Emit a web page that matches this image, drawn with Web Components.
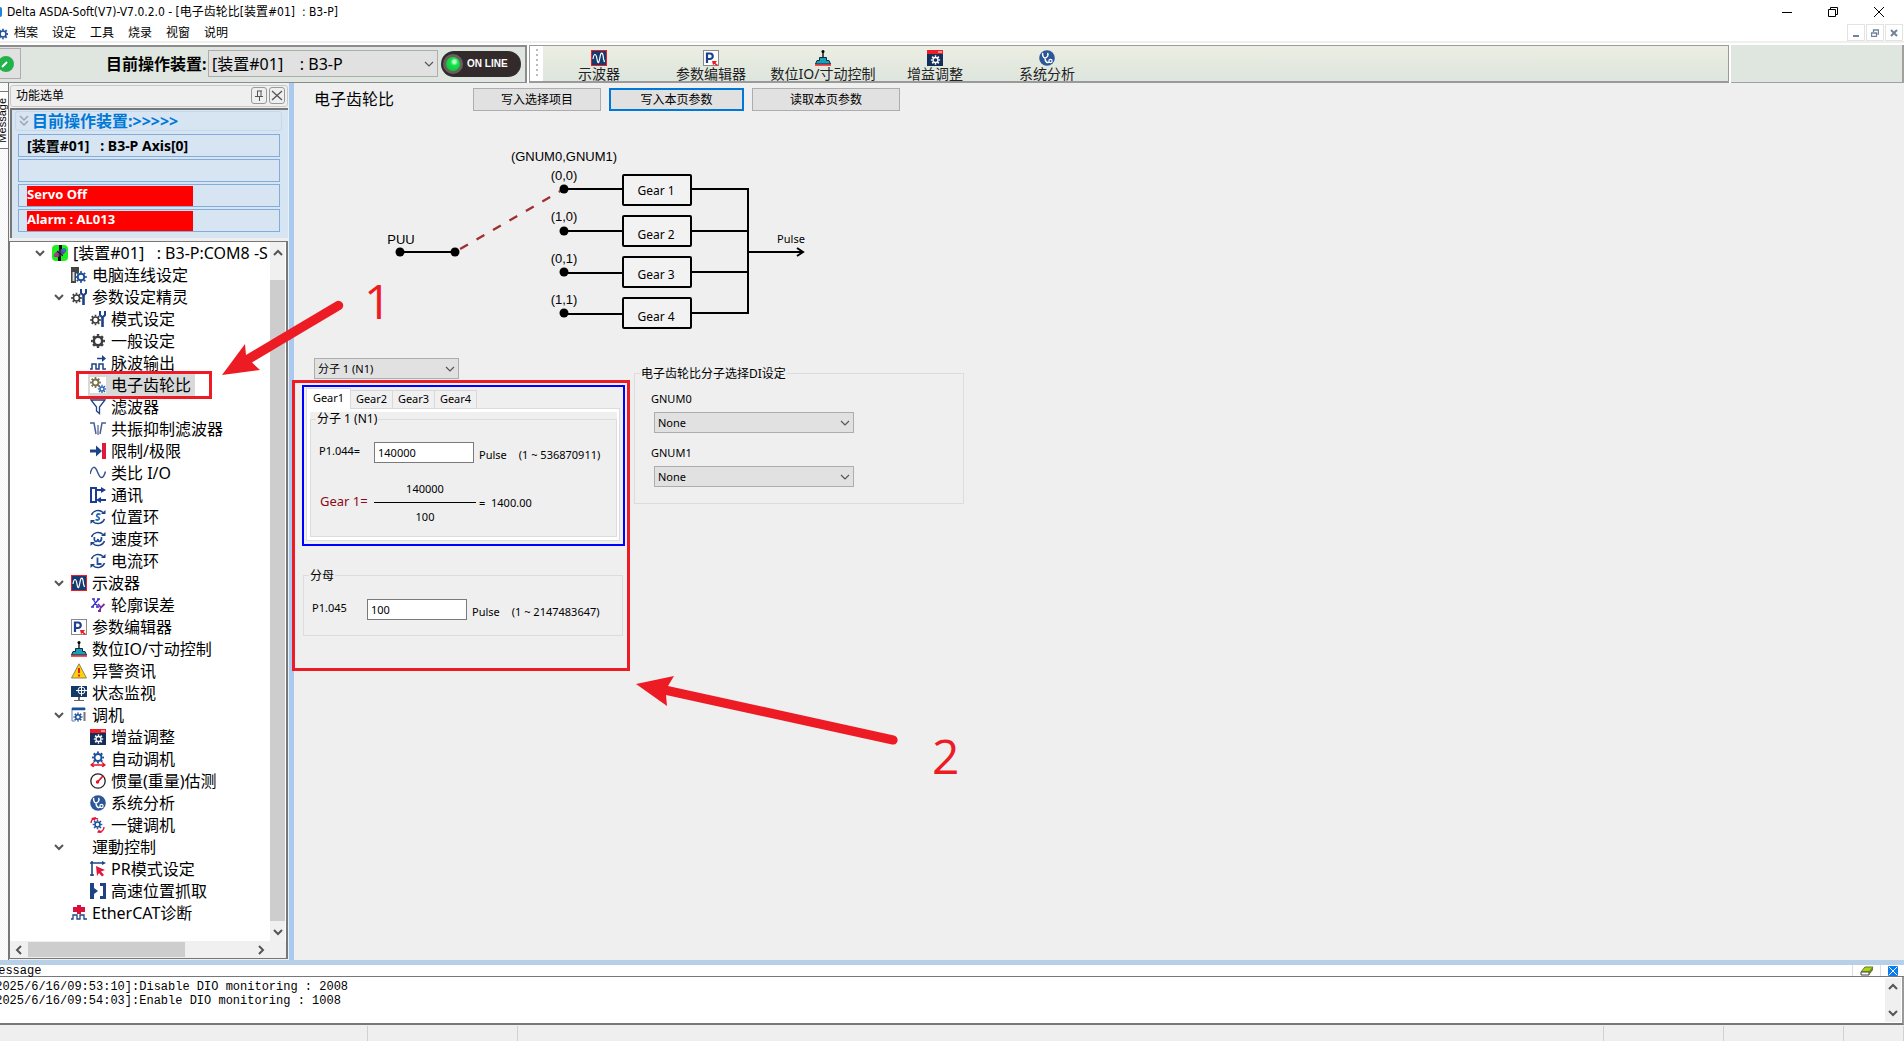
<!DOCTYPE html>
<html lang="zh-CN">
<head>
<meta charset="utf-8">
<title>Delta ASDA-Soft(V7)-V7.0.2.0</title>
<style>
html,body{margin:0;height:100%}
body{overflow:hidden;background:#efefef;color:#000;font:12px/16px "Noto Sans","Noto Sans CJK SC",sans-serif}
</style>
</head>
<body>
<asda-app></asda-app>
<script>
const gear=(x,y,r,c,w=2)=>`<circle cx="${x}" cy="${y}" r="${r}" fill="none" stroke="${c}" stroke-width="${w}"/><circle cx="${x}" cy="${y}" r="${r+w/2+.6}" fill="none" stroke="${c}" stroke-width="1.8" pathLength="16" stroke-dasharray="1 1" stroke-dashoffset=".5"/>`;
const N='#1f4287',B='#1c4f9c',K='#3c3c3c',R='#e81123';
const wrench=`<path d="M12.500 16V7" stroke="${N}" stroke-width="2.600"/><path d="M10 0v4l2.500 2.500L15 4V0" fill="none" stroke="${N}" stroke-width="2"/>`;
const loop=(g)=>`<path d="M1.500 6A7 7 0 0 1 13 3.500M14.500 10A7 7 0 0 1 3 12.500" fill="none" stroke="${N}" stroke-width="1.500"/><path d="M11 5h4.500V1zM5 11H.5v4z" fill="${N}"/>${g}`;
const icons={
root:`<rect width="16" height="16" rx="4" fill="#1df01d"/><path d="M7 0h3v5H7zM6 11h3v5H6z" fill="#111"/><ellipse cx="8" cy="8" rx="7" ry="2.800" transform="rotate(-30 8 8)" fill="#5a4a8c"/><circle cx="4" cy="10" r="2" fill="#c0308a"/><circle cx="12" cy="5" r="2" fill="#2f6fd0"/><path d="M5 6l6 5M8 5v7" stroke="#111"/>`,
pc:`<path d="M0 0h8v6H5v10H0z" fill="#444"/><path d="M1.500 5h2v9h-2z" fill="#ddd"/>${gear(10,10,3.300,B,2)}`,
wiz:gear(5.500,9,3,K,1.600)+wrench,
gear:gear(8,8,4.200,K,2.600),
pulse:`<path d="M0 14h2V9h4v5h3V9h4v5h3" fill="none" stroke="${N}" stroke-width="1.500"/><path d="M7 3.500h6" stroke="${N}" stroke-width="1.500"/><path d="M12 0l4 3.500L12 7z" fill="${N}"/>`,
ratio:`<rect width="16" height="16" fill="#fff"/>${gear(5.500,5.500,3,'#77704a',1.800)}${gear(12,12,2,'#2c64b4',1.400)}`,
filter:`<path d="M1 1h14L9.500 8v6.500L6.500 12V8z" fill="#fff" stroke="${N}" stroke-width="1.300"/>`,
notch:`<path d="M0 2h4l2 11M16 2h-4l-2 11" fill="none" stroke="#4a5f93" stroke-width="1.500"/><path d="M8 4v10" stroke="#4a5f93" stroke-width="1.200"/>`,
limit:`<path d="M0 8h7" stroke="${N}" stroke-width="3"/><path d="M6 2.500L12 8l-6 5.500z" fill="${N}"/><path d="M12 0h4v16h-4z" fill="#e0183c"/>`,
sine:`<path d="M0 9C2.500 0 5 1 7.500 7s5 9 8-.5" fill="none" stroke="#3a568f" stroke-width="1.500"/>`,
comm:`<path d="M1 1h5v14H1z" fill="none" stroke="#1c3c94" stroke-width="2"/><path d="M7 3h6M16 13H9" stroke="#1c3c94" stroke-width="2"/><path d="M11 0l5 3-5 3zM11 10l-5 3 5 3z" fill="#1c3c94"/>`,
ps:loop(`<path d="M10.500 5.500C7 4 5.500 7 8 8s1 4-2.500 2.500" fill="none" stroke="#2a6bb5" stroke-width="1.800"/>`),
vs:loop(`<path d="M4.500 6c-1 5 2.500 6 3.500 2 0 4 4 3 3.500-2" fill="none" stroke="${B}" stroke-width="1.700"/>`),
cs:loop(`<path d="M7.500 4.500v6.500h4" fill="none" stroke="${B}" stroke-width="1.800"/>`),
scope:`<rect x=".5" y=".5" width="15" height="15" fill="#173a6e" stroke="#ee1c25"/><path d="M2 9c1-6 3-6 4 0s2 4 3-2 3-5 3.500 2l1 3" fill="none" stroke="#fff" stroke-width="1.200"/>`,
xy:`<path d="M3 2l5 8M9 2L2 10M2 2h3M7 2h3M1 10h3M6 10h3" stroke="#3a2fd0" stroke-width="1.300"/><path d="M8 7l3 3.500L14.500 7M11 10l-1.500 4M8 14h3" fill="none" stroke="#7a2f9a" stroke-width="1.800"/>`,
param:`<rect x=".5" y=".5" width="15" height="15" fill="#fff" stroke="#8a8a8a"/><path d="M4 13V3.500h3a2.500 2.500 0 0 1 0 5.500H4" fill="none" stroke="#1c3f94" stroke-width="2.200"/><path d="M9 11l5 0-1.500 2 2.500 2-1.500 1-2-2-1.500 1z" fill="#ee1c25"/>`,
dio:`<circle cx="8" cy="1.500" r="1.500"/><path d="M8 2v6" stroke="#000" stroke-width="1.300"/><path d="M4.500 7.500h7v3h2.500l1.500 3.500H.5L2 10.500h2.500z" fill="#1aa0b4" stroke="#0d2848"/><path d="M0 15h16" stroke="#ee1c25" stroke-width="1.500"/>`,
warn:`<path d="M8 .8L15.500 15H.5z" fill="#ffd200" stroke="#8a8468" stroke-linejoin="round"/><path d="M8 5v5M8 11.500v2" stroke="#ee1c25" stroke-width="2"/>`,
mon:`<path d="M0 1h16v11H0z" fill="#123a68"/><path d="M7 12h2v3h4v1H3v-1h4z" fill="#666"/><circle cx="10.500" cy="5.500" r="3.500" fill="none" stroke="#fff"/><path d="M10.500 0v11M5 5.500h11" stroke="#fff"/>`,
tune:`<path d="M1 14V1h13v2M1 14h3" fill="none" stroke="#5b83ba"/><path d="M1 2h13" stroke="#1c4f9c" stroke-width="2.500"/>${gear(7,10,2.300,B,1.500)}<path d="M13.500 5v9" stroke="#777" stroke-width="2"/>`,
gain:`<rect width="16" height="16" fill="#142e5c"/><path d="M0 0h16v4H0z" fill="#ee1c25"/><path d="M11 2h4" stroke="#fff"/>${gear(8.500,10,2.500,'#fff',1.300)}`,
auto:gear(8,6.500,3.500,B,2)+`<path d="M1 14h14M4 11.500L1 14l3 2M12 11.500l3 2.500-3 2" fill="none" stroke="${R}" stroke-width="1.300"/>`,
inertia:`<circle cx="8" cy="8" r="7.200" fill="#fff" stroke="#222" stroke-width="1.300"/><path d="M13 3L7 9.500" stroke="${R}" stroke-width="1.800"/><circle cx="7.500" cy="9" r="1.700" fill="${R}"/>`,
sys:`<circle cx="8" cy="8" r="7.800" fill="#2b5798"/><path d="M4 3c-1 1 0 5 2 5s4-3 2.500-5M6 8c0 5 3 5 4.500 4" fill="none" stroke="#fff" stroke-width="1.500"/><circle cx="11.500" cy="11" r="1.600" fill="none" stroke="#fff" stroke-width="1.200"/>`,
one:gear(7.500,7.500,2.500,B,1.600)+`<path d="M1 6c0-4 4-5.500 7-4M8 14.500c4 1 6-1.500 6-4.500" fill="none" stroke="#e0183c" stroke-width="1.400"/><path d="M1 1l5-1-1 4zM12 16l-5-.500 2-3z" fill="#e0183c"/>`,
pr:`<path d="M2 0v15M0 2h14M0 14h4" fill="none" stroke="${N}" stroke-width="1.600"/><path d="M12 0l4 2-4 2z" fill="${N}"/><path d="M6 5l9 4-4 1.500 3 3.500-2 1.500-3-3.500-2 3z" fill="#e0183c"/>`,
capture:`<path d="M0 0h4v5l4 3-4 3v5H0zM10 0h6v16h-6v-3h3V3h-3z" fill="${N}"/>`,
ecat:`<path d="M6 0h4v2h4v5h-4v2H6V7H2V2h4z" fill="#d8103a"/><path d="M0 14h2v-4h4v4h3v-4h4v4h3" fill="none" stroke="${N}" stroke-width="1.300"/>`,
none:''
};
function define(name,html,setup){
  const t=document.createElement('template');t.innerHTML=html;
  customElements.define(name,class extends HTMLElement{
    constructor(){super();this.attachShadow({mode:'open'}).append(t.content.cloneNode(true));}
    connectedCallback(){if(setup&&!this.ready){this.ready=true;setup(this,this.shadowRoot);}}
  });
}
define('app-icon',`<style>:host{display:block;width:16px;height:16px;flex:none}svg{display:block;width:100%;height:100%}</style><svg viewBox="0 0 16 16" aria-hidden="true"></svg>`,
 (h,s)=>{s.querySelector('svg').innerHTML=icons[h.getAttribute('name')]||'';});

define('chevron-mark',`<style>:host{display:block;width:10px;height:10px;flex:none}:host([dir=up]){transform:rotate(180deg)}:host([dir=left]){transform:rotate(90deg)}:host([dir=right]){transform:rotate(-90deg)}svg{display:block}</style><svg width="10" height="10" aria-hidden="true"><path d="M1 3L5 7 9 3" fill="none" stroke="#555"/></svg>`,
 (h,s)=>{s.querySelector('path').setAttribute('stroke-width',h.hasAttribute('thin')?'1.2':'2');});

define('combo-box',`<style>
:host{display:grid;height:21px;font-size:11px}
select{grid-area:1/1;appearance:none;margin:0;width:100%;height:100%;padding:0 24px 0 3px;border:1px solid #adadad;border-radius:0;background:#e1e1e1;color:#000;font:inherit;white-space:pre}
chevron-mark{grid-area:1/1;justify-self:end;align-self:center;margin-right:4px;pointer-events:none}
</style><select><option></option></select><chevron-mark thin></chevron-mark>`,
 (h,s)=>{const e=s.querySelector('select');e.options[0].textContent=h.getAttribute('value').replace(/_/g,'\u00a0');e.setAttribute('aria-label',h.getAttribute('label'));});

define('title-bar',`<style>
:host{display:flex;align-items:center;box-sizing:border-box;height:24px;background:#fff;padding:0 20px 1px 0;white-space:pre}
i{width:2px;height:10px;background:#1b86d8;border-radius:0 4px 4px 0;margin-right:5px}
span{flex:1;font-family:"DejaVu Sans Condensed","Noto Sans CJK SC",sans-serif}
.c{display:flex;gap:36px}button{border:0;background:none;padding:0;width:10px;height:12px}svg{display:block}
</style><i></i><span>Delta ASDA-Soft(V7)-V7.0.2.0 - [电子齿轮比[装置#01]&nbsp; : B3-P]</span>
<div class="c"><button aria-label="Minimize"><svg width="10" height="12"><path d="M0 6.500h10" stroke="#000"/></svg></button>
<button aria-label="Restore"><svg width="10" height="12"><path d="M.5 3.500h7v7h-7zM2.500 3.500v-2h7v7h-2" fill="none" stroke="#000"/></svg></button>
<button aria-label="Close"><svg width="10" height="12"><path d="M0 1l10 10M10 1L0 11" stroke="#000"/></svg></button></div>`);

define('menu-bar',`<style>
:host{display:flex;align-items:center;height:17px;background:#fff;padding-right:1px}
nav{flex:1;display:flex;gap:14px;padding-left:6px}
button{border:0;background:none;padding:0;font:inherit;color:inherit}
.m{display:flex;gap:1px}.m button{width:18px;height:17px;border:1px solid #e3e3e3;display:grid;place-items:center}svg{display:block}
</style><svg width="8" height="14"><g transform="translate(-8 -2)">${gear(11,10,3,B,1.600)}</g></svg>
<nav><button>档案</button><button>设定</button><button>工具</button><button>烧录</button><button>视窗</button><button>说明</button></nav>
<div class="m"><button aria-label="Minimize document"><svg width="8" height="8"><path d="M1 7h6" stroke="#70839a" stroke-width="2"/></svg></button>
<button aria-label="Restore document"><svg width="8" height="8"><path d="M.5 4h5v3.500h-5zM2.500 3V1h5v4h-1" fill="none" stroke="#70839a" stroke-width="1.300"/></svg></button>
<button aria-label="Close document"><svg width="8" height="8"><path d="M1 1l6 6M7 1L1 7" stroke="#70839a" stroke-width="2"/></svg></button></div>`);

define('tool-button',`<style>
:host{display:block;width:112px;height:100%}
button{display:flex;flex-direction:column;align-items:center;width:100%;height:100%;border:0;background:none;padding:4px 0 0;font:14px/16px "Noto Sans","Noto Sans CJK SC",sans-serif;color:#222;white-space:nowrap}
</style><button><app-icon></app-icon><slot></slot></button>`,(h,s)=>{s.querySelector('app-icon').outerHTML=`<app-icon name="${h.getAttribute('icon')}"></app-icon>`;});

define('tool-bars',`<style>
:host{display:flex;border-top:2px solid #efefef;padding-top:2px;background:#fff;height:38px}
.dev{box-sizing:border-box;width:527px;display:flex;align-items:center;background:#dfe6df;border:solid #8c8c8c;border-width:2px 2px 1px 0;padding-bottom:2px}
.go{box-sizing:border-box;width:21px;height:31px;border:1px solid #adadad;border-left:0;background:#e1e1e1;padding:0;margin-right:85px}
.go svg{display:block}
label{font:bold 16px/24px "Noto Sans","Noto Sans CJK SC",sans-serif;width:102px;white-space:nowrap}
combo-box{width:230px;height:27px;font-size:16px}
.on{display:flex;align-items:center;gap:4px;box-sizing:border-box;width:80px;height:26px;margin-left:3px;border-radius:13px;background:#332b2b;color:#fff;font:bold 10px/12px "Liberation Sans",sans-serif;padding-left:2px;white-space:nowrap}
.on i{box-sizing:border-box;width:20px;height:20px;border-radius:50%;border:3px solid #66605e;background:radial-gradient(circle at 60% 35%,#b6ffc4 0 12%,#19e04a 30%,#0bb634)}
.bar{box-sizing:border-box;width:1200px;flex:0 1 1200px;margin-left:2px;display:flex;border:solid #9a9a9a;border-width:1px 1px 2px 1px;background:linear-gradient(#eceee2,#dde5dd)}
.grip{width:13px;background:#fff;display:flex;justify-content:center}
.grip i{width:2px;margin:3px 0;background:repeating-linear-gradient(#bbb 0 2px,#fff 2px 5px)}
.rest{flex:1;margin-left:2px;background:#dfe6df;border:solid #a0a0a0;border-width:0 2px 1px 0}
</style>
<div class="dev"><button class="go" aria-label="Connect"><svg width="20" height="29"><circle cx="6" cy="15" r="8" fill="#22b24c"/><path d="M2 18l5-5" stroke="#fff" stroke-width="2"/></svg></button>
<label>目前操作装置:</label><combo-box value="[装置#01]___ : B3-P" label="目前操作装置"></combo-box><div class="on"><i></i>ON LINE</div></div>
<div class="bar"><div class="grip"><i></i></div>
<tool-button icon="scope">示波器</tool-button><tool-button icon="param">参数编辑器</tool-button><tool-button icon="dio">数位IO/寸动控制</tool-button><tool-button icon="gain">增益调整</tool-button><tool-button icon="sys">系统分析</tool-button></div>
<div class="rest"></div>`);

define('dock-strip',`<style>
:host{display:block;box-sizing:border-box;width:9px;overflow:hidden;padding-top:8px;border-right:1px solid #777;background:repeating-conic-gradient(#f3f3f3 0 25%,#fff 0 50%) 0 0/2px 2px}
button{display:flex;justify-content:flex-end;align-items:center;width:8px;height:58px;border:solid #777;border-width:1px 0;background:#fff;padding:0}
span{writing-mode:vertical-rl;transform:rotate(180deg);font-size:11px;line-height:12px}
</style><button aria-label="Message"><span>Message</span></button>`);

define('device-group',`<style>
:host{display:block;box-sizing:border-box;height:130px;border:solid #777;border-width:2px 0 0 2px;background:#d7e4f2;padding:1px 6px 0 3px;font:bold 13px/18px "Noto Sans","Noto Sans CJK SC",sans-serif;white-space:nowrap}
.h{box-sizing:border-box;height:20px;margin-bottom:3px;display:flex;align-items:center;gap:3px;padding-left:3px;border:1px solid #c5d8ec;border-radius:3px;color:#0078d7;font-size:16px}
.g{display:flex;flex-direction:column;gap:2px;padding:0 2px 0 3px}
.r{box-sizing:border-box;height:23px;border:1px solid #84acdb;padding:0 8px;display:flex;align-items:center}
.n{font-size:14px}
.a{background:red;color:#fff;width:166px;height:20px;line-height:17px}
</style><div class="h"><svg width="10" height="12"><path d="M1 1l4 4 4-4M1 6l4 4 4-4" fill="none" stroke="#9aa5b0" stroke-width="1.500"/></svg>目前操作装置:&gt;&gt;&gt;&gt;&gt;</div>
<div class="g"><div class="r n">[装置#01]&nbsp;&nbsp; : B3-P Axis[0]</div><div class="r"></div><div class="r"><div class="a">Servo Off</div></div><div class="r"><div class="a">Alarm : AL013</div></div></div>`);

define('tree-item',`<style>
:host{display:flex;align-items:center;height:22px;font-size:16px;white-space:nowrap;padding-left:calc(25px + 19px*(var(--l) - 1))}
.x{width:10px;margin-right:7px;flex:none}
.t{display:flex;align-items:center;gap:5px;height:22px;padding:0 4px 0 2px;margin-left:-2px}
:host([aria-selected]) .t{background:#d9d9d9}
</style><div class="x"></div><div class="t"><app-icon></app-icon><span><slot></slot></span></div>`,
 (h,s)=>{h.setAttribute('role','treeitem');h.style.setProperty('--l',h.getAttribute('level'));
 s.querySelector('app-icon').outerHTML=`<app-icon name="${h.getAttribute('icon')}"></app-icon>`;
 if(h.hasAttribute('open'))s.querySelector('.x').innerHTML='<chevron-mark></chevron-mark>';});

define('nav-tree',`<style>
:host{box-sizing:border-box;flex:1;min-height:0;display:grid;grid-template:1fr 17px/1fr 16px;border:1px solid #777;border-right-width:2px;background:#fff}
.v{overflow:hidden}
.sy,.sx{display:flex;align-items:center;background:#f0f0f0}
.sy{flex-direction:column;width:15px}.sy chevron-mark{margin:6px 0 4px}.sy i{flex:1;width:15px;background:#cdcdcd;margin-top:18px}
.sx chevron-mark{margin:0 4px}.sx i{height:15px;width:157px;background:#cdcdcd;margin-right:auto}
.k{background:#f0f0f0}
</style><div class="v" role="tree">
<tree-item level="1" icon="root" open>[装置#01]&nbsp;&nbsp; : B3-P:COM8 -S</tree-item>
<tree-item level="2" icon="pc">电脑连线设定</tree-item>
<tree-item level="2" icon="wiz" open>参数设定精灵</tree-item>
<tree-item level="3" icon="wiz">模式设定</tree-item>
<tree-item level="3" icon="gear">一般设定</tree-item>
<tree-item level="3" icon="pulse">脉波输出</tree-item>
<tree-item level="3" icon="ratio" aria-selected="true">电子齿轮比</tree-item>
<tree-item level="3" icon="filter">滤波器</tree-item>
<tree-item level="3" icon="notch">共振抑制滤波器</tree-item>
<tree-item level="3" icon="limit">限制/极限</tree-item>
<tree-item level="3" icon="sine">类比 I/O</tree-item>
<tree-item level="3" icon="comm">通讯</tree-item>
<tree-item level="3" icon="ps">位置环</tree-item>
<tree-item level="3" icon="vs">速度环</tree-item>
<tree-item level="3" icon="cs">电流环</tree-item>
<tree-item level="2" icon="scope" open>示波器</tree-item>
<tree-item level="3" icon="xy">轮廓误差</tree-item>
<tree-item level="2" icon="param">参数编辑器</tree-item>
<tree-item level="2" icon="dio">数位IO/寸动控制</tree-item>
<tree-item level="2" icon="warn">异警资讯</tree-item>
<tree-item level="2" icon="mon">状态监视</tree-item>
<tree-item level="2" icon="tune" open>调机</tree-item>
<tree-item level="3" icon="gain">增益调整</tree-item>
<tree-item level="3" icon="auto">自动调机</tree-item>
<tree-item level="3" icon="inertia">惯量(重量)估测</tree-item>
<tree-item level="3" icon="sys">系统分析</tree-item>
<tree-item level="3" icon="one">一键调机</tree-item>
<tree-item level="2" icon="none" open>運動控制</tree-item>
<tree-item level="3" icon="pr">PR模式设定</tree-item>
<tree-item level="3" icon="capture">高速位置抓取</tree-item>
<tree-item level="2" icon="ecat">EtherCAT诊断</tree-item>
</div><div class="sy"><chevron-mark dir="up"></chevron-mark><i></i><chevron-mark></chevron-mark></div>
<div class="sx"><chevron-mark dir="left"></chevron-mark><i></i><chevron-mark dir="right"></chevron-mark></div><div class="k"></div>`);

define('side-panel',`<style>
:host{display:flex;flex-direction:column;box-sizing:border-box;width:285px;border-right:5px solid #a9c9ee;padding:2px 1px 1px 0}
header{box-sizing:border-box;height:22px;margin:0 0 1px 1px;display:flex;align-items:center;gap:2px;border:1px solid #c8c8c8;border-radius:3px;padding:0 2px 1px 5px}
h2{flex:1;margin:0;font:12px/16px "Noto Sans","Noto Sans CJK SC",sans-serif}
header button{box-sizing:border-box;width:16px;height:17px;padding:0;border:1px solid #999;border-radius:3px;background:none}svg{display:block}
device-group{margin:0 0 3px 1px}
</style><header><h2>功能选单</h2><button aria-label="Pin"><svg width="14" height="15"><path d="M5 3h5M5.500 3v5M9 3v5M3 8.500h8M7.500 8v5" fill="none" stroke="#555"/></svg></button><button aria-label="Close"><svg width="14" height="15"><path d="M2 3l10 9M12 3L2 12" stroke="#555" stroke-width="1.300"/></svg></button></header>
<device-group></device-group><nav-tree></nav-tree>`);

define('gear-diagram',`<style>:host{display:block}svg{display:block}.a{font:13px "Liberation Sans",sans-serif;text-anchor:middle}.g{font:12px "Noto Sans",sans-serif;text-anchor:middle}</style>
<svg width="450" height="190" viewBox="380 145 450 190" role="img" aria-label="Gear ratio selection">
<g fill="none" stroke="#000" stroke-width="2"><path d="M401 252h55M565 189h58M565 231h58M565 273h58M565 314h58M692 189h57v124h-57M692 231h57M692 272h57M749 252h54M798 248l6 4-6 4"/>
<g fill="#f2f2f2"><rect x="624" y="175" width="68" height="30" rx="1"/><rect x="624" y="216" width="68" height="30" rx="1"/><rect x="624" y="257" width="68" height="30" rx="1"/><rect x="624" y="298" width="68" height="30" rx="1"/></g></g>
<path d="M565 189L456 252" stroke="#a03030" stroke-width="2.400" stroke-dasharray="9 10" stroke-dashoffset="3"/>
<circle cx="401" cy="252" r="4.500"/><circle cx="456" cy="252" r="4.500"/><circle cx="565" cy="189" r="4.500"/><circle cx="565" cy="231" r="4.500"/><circle cx="565" cy="272" r="4.500"/><circle cx="565" cy="313" r="4.500"/>
<g class="a"><text x="565" y="161">(GNUM0,GNUM1)</text><text x="565" y="180">(0,0)</text><text x="565" y="221">(1,0)</text><text x="565" y="263">(0,1)</text><text x="565" y="304">(1,1)</text><text x="402" y="244">PUU</text></g>
<g class="g"><text x="657" y="195">Gear 1</text><text x="657" y="239">Gear 2</text><text x="657" y="279">Gear 3</text><text x="657" y="321">Gear 4</text></g>
<text x="792" y="243" style="font:11px 'Noto Sans',sans-serif;text-anchor:middle">Pulse</text>
</svg>`);

define('group-box',`<style>
:host{display:block}
fieldset{box-sizing:border-box;height:100%;min-width:0;margin:0;padding:0;border:1px solid #dcdcdc}
legend{margin-left:5px;padding:var(--legend-top,2px) 1px 0;font-size:12px;line-height:14px}
</style><fieldset><legend></legend><slot></slot></fieldset>`,(h,s)=>{s.querySelector('legend').textContent=h.getAttribute('legend');});

define('param-row',`<style>
:host{display:flex;align-items:center;font-size:11px;white-space:nowrap}
label{flex:none;width:55px;line-height:21px;height:24px}
input{box-sizing:border-box;width:100px;height:21px;margin:0 5px 0 0;padding:0 3px;border:1px solid #7a7a7a;border-radius:0;font:inherit;color:#000;background:#fff}
span{margin:5px 12px 0 0}
</style><label for="f"></label><input id="f"><span>Pulse</span><span><slot></slot></span>`,
 (h,s)=>{s.querySelector('label').textContent=h.getAttribute('label');s.querySelector('input').value=h.getAttribute('value');});

define('gear-tabs',`<style>
:host{display:block;box-sizing:border-box;height:161px;border:2px solid #00f;padding:1px 3px 3px 2px}
.tabs{display:flex;align-items:flex-end;height:21px;position:relative;margin-bottom:-1px}
.tabs button{box-sizing:border-box;width:42px;height:19px;border:1px solid #d9d9d9;border-left:0;background:#f0f0f0;font:11px/16px "Noto Sans",sans-serif;padding:0 0 1px;color:#000}
.tabs button[aria-selected=true]{width:45px;height:21px;background:#fff;border:1px solid #dcdcdc;border-bottom:0;padding-bottom:3px}
.page{box-sizing:border-box;height:133px;border:1px solid #dcdcdc;background:#fff;padding:3px 2px 3px 3px}
.in{background:#efefef;height:125px}
group-box{height:125px;--legend-top:0}
param-row{padding:14px 0 0 8px}
.f{display:flex;align-items:center;padding:11px 0 0 9px;font-size:11px}
.f b{font:13px/16px "Noto Sans",sans-serif;color:#8b0a14;width:54px;padding-bottom:4px}
.q{display:grid;text-align:center;width:102px;line-height:27px;margin-right:3px}.q span:first-child{border-bottom:1px solid #000}.q span:last-child{line-height:28px}
</style><div class="tabs" role="tablist"><button role="tab" aria-selected="true">Gear1</button><button role="tab">Gear2</button><button role="tab">Gear3</button><button role="tab">Gear4</button></div>
<div class="page"><div class="in"><group-box legend="分子 1 (N1)"><param-row label="P1.044=" value="140000">(1 ~ 536870911)</param-row>
<div class="f"><b>Gear 1=</b><div class="q"><span>140000</span><span>100</span></div><span>=&nbsp; 1400.00</span></div></group-box></div></div>`);

define('ratio-page',`<style>
:host{display:block;flex:1;min-width:0;background:#efefef;padding-top:5px}
.top{display:flex;align-items:center;height:23px;padding-left:20px;gap:8px}
h1{font:16px/22px "Noto Sans","Noto Sans CJK SC",sans-serif;margin:0;width:151px;padding-bottom:2px}
.top button{box-sizing:border-box;height:23px;border:1px solid #adadad;background:#e1e1e1;padding:0;font:inherit;color:#000;width:148px}
.top button:nth-of-type(1){width:128px}.top button:nth-of-type(2){width:135px;border:2px solid #0078d7}
gear-diagram{margin:34px 0 0 85px}
.cols{display:flex;gap:9px;padding:23px 0 0 8px}
.l{width:323px;display:flex;flex-direction:column}
.l combo-box{width:145px;margin:0 0 6px 12px}
.l group-box{margin:21px 2px 0 1px;height:69px}
.l param-row{padding:14px 0 0 8px}
.r{width:330px;padding-top:7px}.r group-box{height:139px}
.di{display:grid;padding:10px 0 0 16px;font-size:11px;line-height:16px}
.di combo-box{width:200px;margin:5px 0 12px 3px}
</style>
<div class="top"><h1>电子齿轮比</h1><button>写入选择项目</button><button>写入本页参数</button><button>读取本页参数</button></div>
<gear-diagram></gear-diagram>
<div class="cols"><div class="l"><combo-box value="分子 1 (N1)" label="分子"></combo-box><gear-tabs></gear-tabs>
<group-box legend="分母"><param-row label="P1.045" value="100">(1 ~ 2147483647)</param-row></group-box></div>
<div class="r"><group-box legend="电子齿轮比分子选择DI设定"><div class="di"><span>GNUM0</span><combo-box value="None" label="GNUM0"></combo-box><span>GNUM1</span><combo-box value="None" label="GNUM1"></combo-box></div></group-box></div></div>`);

define('message-pane',`<style>
:host{display:block;border-top:5px solid #b8cfe8;background:#fff;font:12px/14px "Liberation Mono",monospace}
header{display:flex;height:11px;line-height:12px;border-bottom:1px solid #777}
header b{flex:1;font-weight:normal;margin-left:-9px}
header button{border:0;border-left:1px solid #ddd;background:none;padding:0;width:28px;height:11px;display:grid;place-items:center}
header button:last-child{width:24px}svg{display:block}
.b{display:flex;height:46px;border-bottom:2px solid #777;border-right:2px solid #999}
.log{flex:1;margin-left:-12px;padding-top:3px;white-space:pre}
.s{width:16px;margin:1px;background:#f0f0f0;display:flex;flex-direction:column;align-items:center;justify-content:space-between;padding:4px 0;box-sizing:border-box}
</style><header><b>Message</b><button aria-label="Clear"><svg width="14" height="10"><path d="M5 1h8l-4 5H1z" fill="#a8d614" stroke="#667a20"/><path d="M1 6h8v3H1z" fill="#fff" stroke="#444"/><path d="M9 9l4-5V1L9 6z" fill="#6b7b2a"/></svg></button><button aria-label="Close"><svg width="10" height="10"><rect width="10" height="10" rx="1" fill="#0a7cf0"/><path d="M1 1l8 8M9 1L1 9" stroke="#fff"/></svg></button></header>
<div class="b"><div class="log"><div>[2025/6/16/09:53:10]:Disable DIO monitoring : 2008</div><div>[2025/6/16/09:54:03]:Enable DIO monitoring : 1008</div></div><div class="s"><chevron-mark dir="up"></chevron-mark><chevron-mark></chevron-mark></div></div>`);

define('status-bar',`<style>
:host{display:flex;height:15px;background:#efefef;padding-top:1px}
i{border-right:1px solid #d2d2d2;box-sizing:border-box}
.a{width:368px}.b{width:150px}.c{flex:1}.d{width:120px}.e{width:60px}
</style><i class="a"></i><i class="b"></i><i class="c"></i><i class="d"></i><i class="d"></i><i class="e"></i>`);

define('annotation-layer',`<style>:host{position:absolute;left:0;top:0;pointer-events:none}svg{display:block}text{font:48px "Open Sans",sans-serif;fill:#ed1c24}</style>
<svg width="1000" height="820"><g fill="none" stroke="#ed1c24" stroke-width="3"><rect x="77.500" y="372.500" width="133" height="25"/><rect x="293.500" y="381.500" width="335" height="288"/></g>
<g fill="#ed1c24"><path d="M222 375L245 344 246 355 336 301.500a4.500 4.500 0 0 1 5 8L252 362.500 260 370z"/><path d="M636 684L674 676 668 686 894 735.500a4.500 4.500 0 0 1-2 9L666 695 667 706z"/></g>
<text x="364" y="319">1</text><text x="932" y="774">2</text></svg>`);

define('asda-app',`<style>
:host{display:flex;flex-direction:column;height:100vh;overflow:hidden}
.work{flex:1;display:flex;min-height:0}
</style><title-bar></title-bar><menu-bar></menu-bar><tool-bars></tool-bars>
<div class="work"><dock-strip></dock-strip><side-panel></side-panel><ratio-page></ratio-page></div>
<message-pane></message-pane><status-bar></status-bar><annotation-layer></annotation-layer>`);
</script>
</body>
</html>
